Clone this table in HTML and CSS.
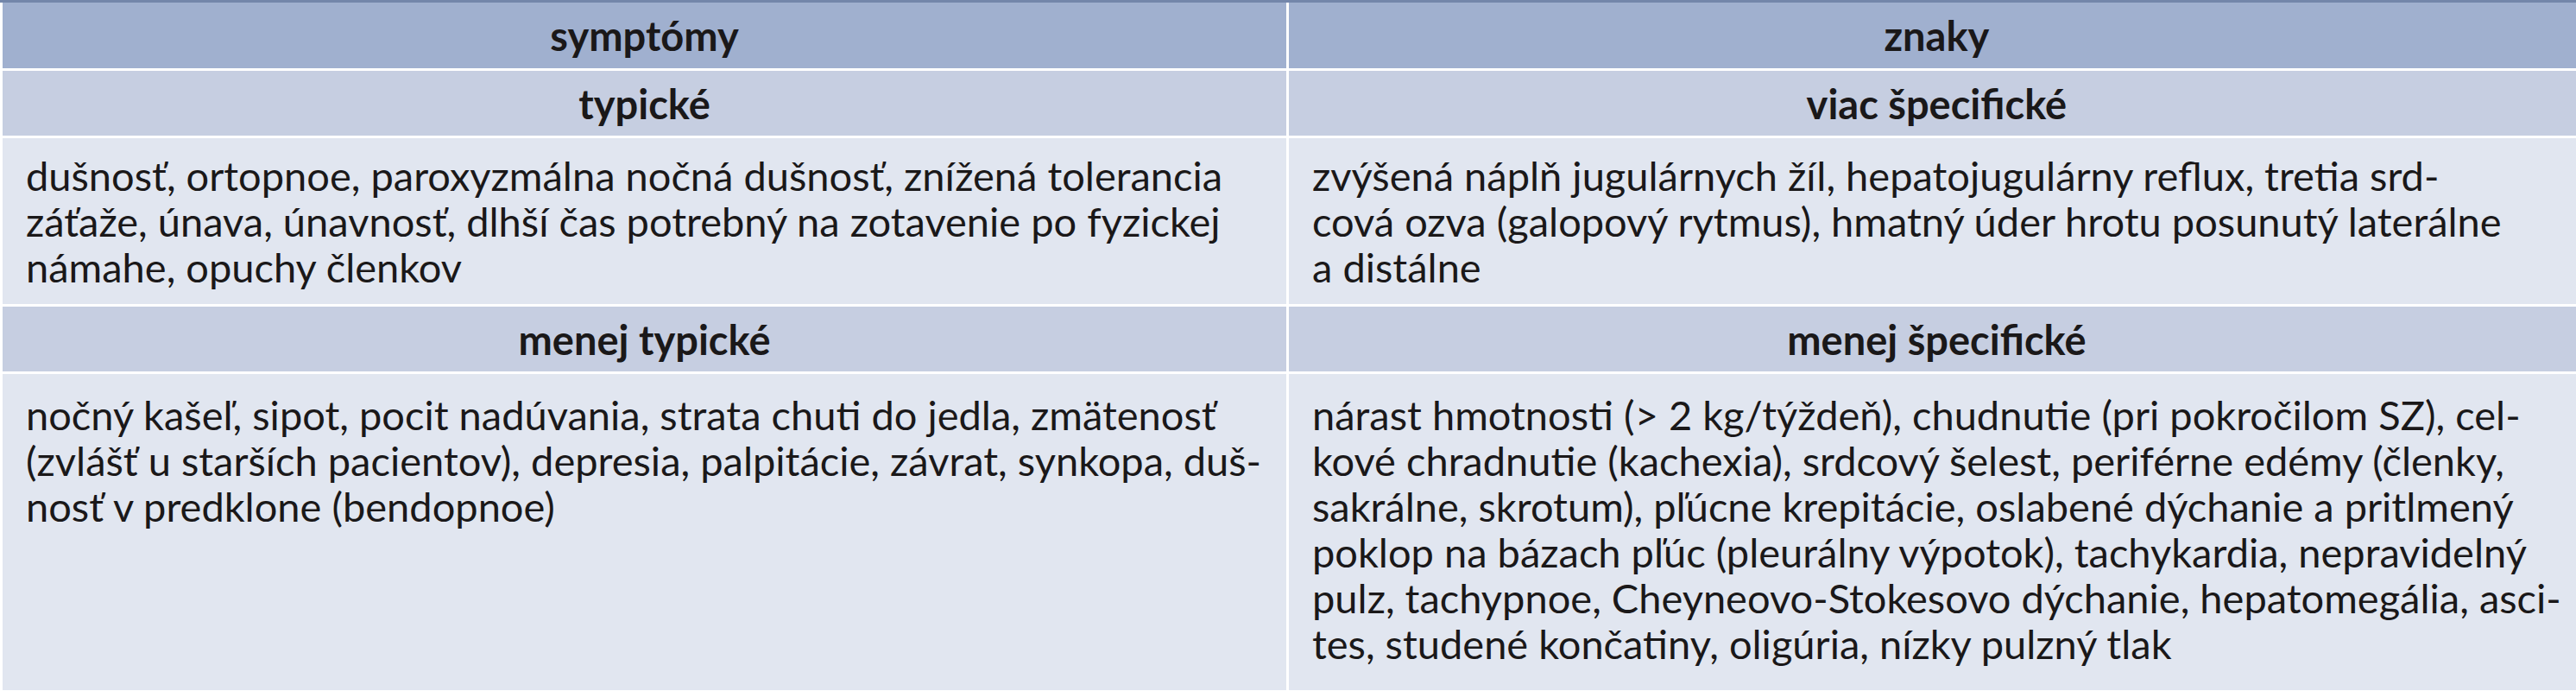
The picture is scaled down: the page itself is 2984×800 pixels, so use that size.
FILE: index.html
```html
<!DOCTYPE html>
<html lang="sk">
<head>
<meta charset="utf-8">
<title>Symptómy a znaky</title>
<link rel="stylesheet" href="styles.css">
</head>
<body>
<div class="sheet">
  <div class="cell head">symptómy</div>
  <div class="cell head">znaky</div>

  <div class="cell sub">typické</div>
  <div class="cell sub">viac špecifické</div>

  <div class="cell body first">dušnosť, ortopnoe, paroxyzmálna nočná dušnosť, znížená tolerancia<br>záťaže, únava, únavnosť, dlhší čas potrebný na zotavenie po fyzickej<br>námahe, opuchy členkov</div>
  <div class="cell body first">zvýšená náplň jugulárnych žíl, hepatojugulárny reflux, tretia srd-<br>cová ozva (galopový rytmus), hmatný úder hrotu posunutý laterálne<br>a distálne</div>

  <div class="cell sub">menej typické</div>
  <div class="cell sub">menej špecifické</div>

  <div class="cell body last">nočný kašeľ, sipot, pocit nadúvania, strata chuti do jedla, zmätenosť<br>(zvlášť u starších pacientov), depresia, palpitácie, závrat, synkopa, duš-<br>nosť v predklone (bendopnoe)</div>
  <div class="cell body last">nárast hmotnosti (&gt; 2 kg/týždeň), chudnutie (pri pokročilom SZ), cel-<br>kové chradnutie (kachexia), srdcový šelest, periférne edémy (členky,<br>sakrálne, skrotum), pľúcne krepitácie, oslabené dýchanie a pritlmený<br>poklop na bázach pľúc (pleurálny výpotok), tachykardia, nepravidelný<br>pulz, tachypnoe, Cheyneovo-Stokesovo dýchanie, hepatomegália, asci-<br>tes, studené končatiny, oligúria, nízky pulzný tlak</div>
</div>
</body>
</html>
```

FILE: styles.css
```css
html, body {
  margin: 0;
  padding: 0;
  background: #ffffff;
}

body {
  font-family: "Lato", "Liberation Sans", sans-serif;
  color: #1a1819;
}

.sheet {
  width: 2984px;
  box-sizing: border-box;
  display: grid;
  grid-template-columns: 1487px 1fr;
  grid-template-rows: 76px 75px 192px 75px 366px;
  gap: 3px;
  padding: 0 3px;
  border-top: 3px solid #7386aa;
  background: #ffffff;
}

.cell {
  box-sizing: border-box;
  font-size: 47px;
}

.head {
  background: #a0b0cf;
  font-weight: 700;
  display: flex;
  align-items: center;
  justify-content: center;
}

.sub {
  background: #c6cee1;
  font-weight: 700;
  display: flex;
  align-items: center;
  justify-content: center;
}

.body {
  background: #e1e6f0;
  line-height: 53px;
  white-space: nowrap;
  padding: 17px 27px 0 27px;
}

.last {
  padding-top: 21px;
}
```
